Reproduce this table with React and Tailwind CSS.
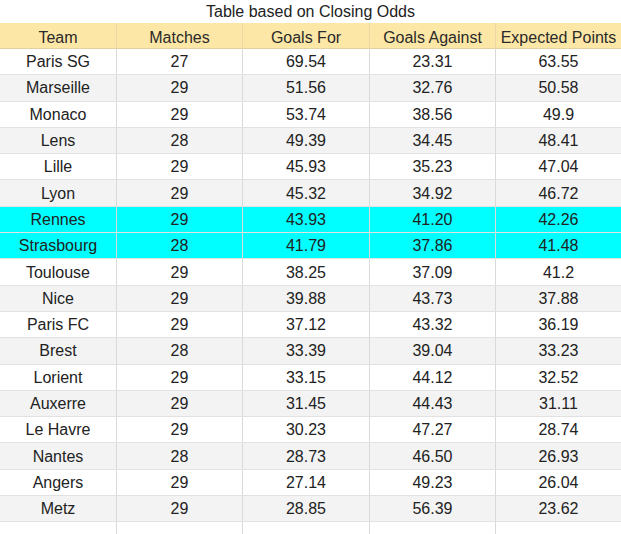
import React from "react";

const rows = [
  ["Paris SG", "27", "69.54", "23.31", "63.55"],
  ["Marseille", "29", "51.56", "32.76", "50.58"],
  ["Monaco", "29", "53.74", "38.56", "49.9"],
  ["Lens", "28", "49.39", "34.45", "48.41"],
  ["Lille", "29", "45.93", "35.23", "47.04"],
  ["Lyon", "29", "45.32", "34.92", "46.72"],
  ["Rennes", "29", "43.93", "41.20", "42.26", true],
  ["Strasbourg", "28", "41.79", "37.86", "41.48", true],
  ["Toulouse", "29", "38.25", "37.09", "41.2"],
  ["Nice", "29", "39.88", "43.73", "37.88"],
  ["Paris FC", "29", "37.12", "43.32", "36.19"],
  ["Brest", "28", "33.39", "39.04", "33.23"],
  ["Lorient", "29", "33.15", "44.12", "32.52"],
  ["Auxerre", "29", "31.45", "44.43", "31.11"],
  ["Le Havre", "29", "30.23", "47.27", "28.74"],
  ["Nantes", "28", "28.73", "46.50", "26.93"],
  ["Angers", "29", "27.14", "49.23", "26.04"],
  ["Metz", "29", "28.85", "56.39", "23.62"],
];

const headers = ["Team", "Matches", "Goals For", "Goals Against", "Expected Points"];

const grid = "grid grid-cols-[117px_126px_127px_126px_125px]";

export default function App() {
  return (
    <div className="w-[621px] h-[534px] overflow-hidden bg-white text-[16px] text-[#222] font-['Liberation_Sans',Arial,sans-serif]">
      {/* Title */}
      <div className="h-[23px] flex items-center justify-center text-[#222]">
        Table based on Closing Odds
      </div>

      {/* Header */}
      <div className={`${grid} h-[26px] bg-[#fde7a6] border-b border-[#e3d2a0]`}>
        {headers.map((h, i) => (
          <div
            key={h}
            className={`flex items-center justify-center pt-[3px] text-[#2a2a2a] ${i < 4 ? "border-r border-[#ead9a6]" : ""}`}
          >
            {h}
          </div>
        ))}
      </div>

      {/* Body */}
      {rows.map((r, idx) => {
        const bg = r[5] ? "bg-[#00ffff]" : idx % 2 === 1 ? "bg-[#f3f3f3]" : "bg-white";
        return (
          <div key={r[0]} className={`${grid} h-[26.3px] border-b border-[#e2e2e2] ${bg}`}>
            {r.slice(0, 5).map((c, i) => (
              <div
                key={i}
                className={`flex items-center justify-center pt-px ${i < 4 ? "border-r border-[#dadada]" : ""}`}
              >
                {c}
              </div>
            ))}
          </div>
        );
      })}

      {/* Empty trailing row */}
      <div className={`${grid} h-[26px] bg-white`}>
        {[0, 1, 2, 3, 4].map((i) => (
          <div key={i} className={i < 4 ? "border-r border-[#dadada]" : ""} />
        ))}
      </div>
    </div>
  );
}
